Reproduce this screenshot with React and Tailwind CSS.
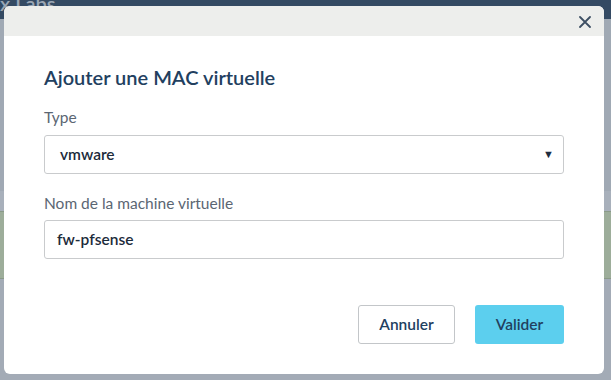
import React from "react";

export default function App() {
  return (
    <div className="relative w-[611px] h-[380px] overflow-hidden bg-[#a3abb6] font-['Lato',sans-serif]">
      {/* page behind the overlay */}
      <div className="h-[20px] bg-[#344a63] text-[#9aa6b4] text-[20px] font-semibold leading-[8px] -mt-[1px]">x Labs</div>
      <div className="h-[172px] bg-[#a0a9b4]" />
      <div className="h-[20px] bg-[#a8b0bb]" />
      <div className="h-[68px] bg-[#9dad9a] border-y border-[#8a9a88]" />

      {/* modal */}
      <div className="absolute left-[4px] top-[6px] w-[600px] h-[368px] bg-white rounded-[6px] overflow-hidden flex flex-col">
        <div className="h-[30px] bg-[#edeeec] flex items-center justify-end pr-[13px] pt-[2px]">
          <svg width="12" height="12" viewBox="0 0 12 12" className="text-[#3d4f63]">
            <path d="M1 1L11 11M11 1L1 11" stroke="currentColor" strokeWidth="1.8" strokeLinecap="round" />
          </svg>
        </div>
        <div className="px-[40px] pt-[27px] flex flex-col">
          <h2 className="text-[20px] font-semibold text-[#22405f] leading-[28px]">Ajouter une MAC virtuelle</h2>
          <label className="mt-[16px] text-[15.5px] text-[#5b6673] leading-[20px]">Type</label>
          <div className="mt-[8px] h-[39px] w-[520px] border border-[#c9cbcd] rounded-[3px] flex items-center justify-between pl-[15px] pr-[9px]">
            <span className="text-[15.5px] font-semibold text-[#1c2b3b]">vmware</span>
            <span className="text-[11px] text-[#1f2d40]">▼</span>
          </div>
          <label className="mt-[19px] text-[15.5px] text-[#5b6673] leading-[20px]">Nom de la machine virtuelle</label>
          <div className="mt-[7px] h-[39px] w-[520px] border border-[#c9cbcd] rounded-[3px] flex items-center pl-[12px]">
            <span className="text-[15.5px] font-semibold text-[#1c2b3b]">fw-pfsense</span>
          </div>
          <div className="mt-[46px] flex justify-end gap-[20px] w-[520px]">
            <button className="h-[39px] w-[97px] border border-[#c3c6c9] rounded-[3px] bg-white text-[15.5px] font-semibold text-[#22405f]">Annuler</button>
            <button className="h-[39px] w-[89px] rounded-[3px] bg-[#5ccfee] text-[15.5px] font-semibold text-[#22405f]">Valider</button>
          </div>
        </div>
      </div>
    </div>
  );
}
